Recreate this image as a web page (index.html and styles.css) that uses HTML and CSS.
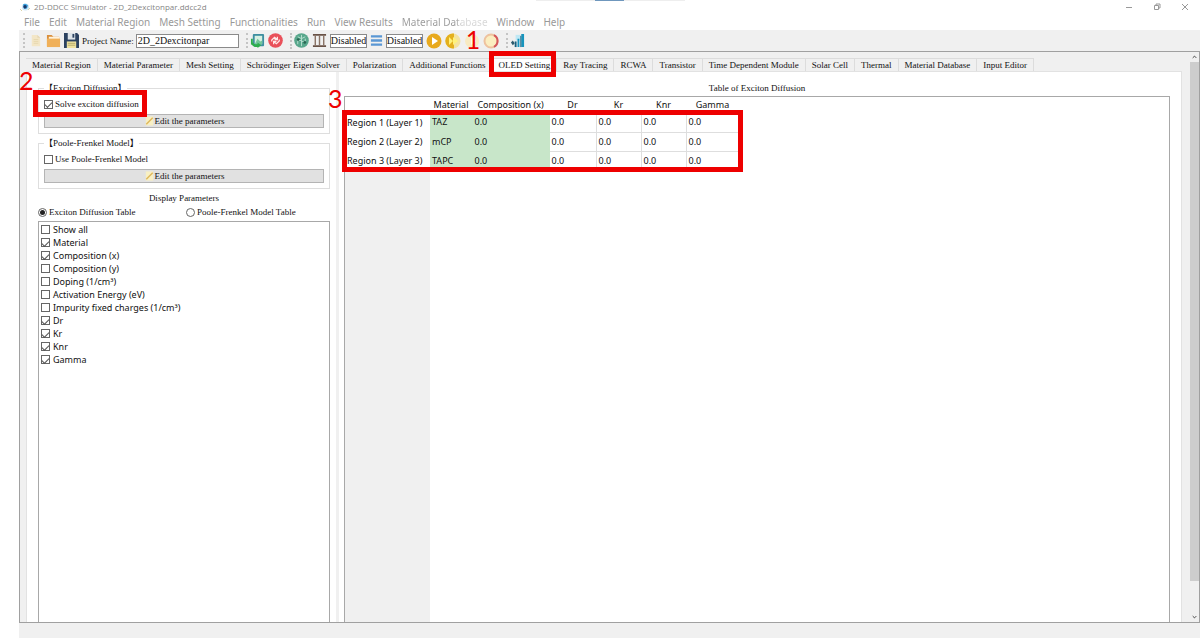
FILE: index.html
```html
<!DOCTYPE html>
<html lang="en">
<head>
<meta charset="utf-8">
<title>2D-DDCC Simulator - 2D_2Dexcitonpar.ddcc2d</title>
<link rel="stylesheet" href="styles.css">
</head>
<body>
<div class="app">
  <header class="titlebar">
    <svg class="app-icon" viewBox="0 0 12 10" aria-hidden="true"><circle cx="6.5" cy="5" r="3.6" fill="#cfe6f5"/><path d="M4 2.5a3.5 3.5 0 0 1 5 1l-1 3-3 .5z" fill="#3aa0dc"/><circle cx="6" cy="4.8" r="1.7" fill="#17386b"/><path d="M1 7l2 2M9 8l2-2" stroke="#d9d3a8"/></svg>
    <span class="title">2D-DDCC Simulator - 2D_2Dexcitonpar.ddcc2d</span>
    <div class="window-buttons">
      <button aria-label="Minimize"><svg viewBox="0 0 8 8"><path d="M1 4.5h6"/></svg></button>
      <button aria-label="Restore"><svg viewBox="0 0 8 8"><path d="M1.5 2.5h4v4h-4zM3 2.5v-1.500h4v4H5.500"/></svg></button>
      <button aria-label="Close"><svg viewBox="0 0 8 8"><path d="M1 1l6 6M7 1L1 7"/></svg></button>
    </div>
    <div class="snap-bar"></div>
  </header>
  <nav class="menubar">
    <a href="#">File</a><a href="#">Edit</a><a href="#">Material Region</a><a href="#">Mesh Setting</a><a href="#">Functionalities</a><a href="#">Run</a><a href="#">View Results</a><a href="#" class="fading">Material Database</a><a href="#">Window</a><a href="#">Help</a>
  </nav>
  <div class="toolbar">
    <div class="tool-group files">
      <button aria-label="New"><svg viewBox="0 0 16 16"><path d="M4 2h6l3 3v9H4z" fill="#f3e6c6"/><path d="M10 2v3h3" fill="#e4d6b4"/><path d="M6 7h5M6 9h5M6 11h5" stroke="#e6d7ae"/></svg></button>
      <button aria-label="Open"><svg viewBox="0 0 16 16"><path d="M1 2h5l2 2h6v10H1z" fill="#d98f3c"/><path d="M3 4h11v5H3z" fill="#fff3dc"/><path d="M1 6h14v9H1z" fill="#f0b059"/></svg></button>
      <button aria-label="Save"><svg viewBox="0 0 16 16"><path d="M0 0h14l2 2v14H0z" fill="#2c4260"/><path d="M4 0h8v7H4z" fill="#dfe5ea"/><path d="M9 1h2v4H9z" fill="#2c4260"/><path d="M3 9h10v7H3z" fill="#efe2a0"/><path d="M4 11h8M4 13h8" stroke="#b8ab6a"/></svg></button>
      <label for="project">Project Name:</label>
      <input id="project" class="project" type="text" value="2D_2Dexcitonpar">
    </div>
    <div class="tool-group">
      <button aria-label="Export picture"><svg viewBox="0 0 16 16"><rect x="3" y="1" width="12" height="13" rx="1" fill="#3e8fa0"/><rect x="5" y="3" width="8" height="9" fill="#d7f0e2"/><path d="M5 12l3-6 3 3 2-1v4z" fill="#75c79a"/><path d="M1 6v6l4 3h4v-3H5L3 10V6z" fill="#2eae4d"/><path d="M8 10l4 3-4 3z" fill="#2eae4d"/></svg></button>
      <button aria-label="Refresh"><svg viewBox="0 0 16 16"><circle cx="8" cy="8" r="7.800" fill="#e9505a"/><path d="M4 9V7.500L7 4.500l3 2.500M10 4v3H7M12 7v1.500L9 11.500 6 9M6 12V9h3" fill="none" stroke="#ffe9e9" stroke-width="1.300"/></svg></button>
    </div>
    <div class="tool-group">
      <button aria-label="Mesh"><svg viewBox="0 0 16 16"><circle cx="8" cy="8" r="7.800" fill="#58a78c"/><path d="M8 2v12M4 4l4 2 4-2M4 12V8h4M8 9h4V6" fill="none" stroke="#b9dfd0"/><circle cx="4.500" cy="7" r="1.500" fill="#286653"/><circle cx="11.500" cy="10" r="1.500" fill="#286653"/></svg></button>
      <button aria-label="Structure"><svg viewBox="0 0 16 16"><path d="M1 2h14M1 14h14" stroke="#695246" stroke-width="2"/><path d="M3.500 3v10M8 3v10M12.500 3v10" stroke="#8b7467" stroke-width="1.500"/></svg></button>
      <input class="state" type="text" value="Disabled" aria-label="Structure state" readonly>
      <button class="layers" aria-label="Layers"><svg viewBox="0 0 14 16"><path d="M1 3.500h12M1 8h12M1 12.500h12" stroke="#5a97d4" stroke-width="2.500"/></svg></button>
      <input class="state" type="text" value="Disabled" aria-label="Layer state" readonly>
      <button class="run" aria-label="Run"><svg viewBox="0 0 16 16"><circle cx="8" cy="8" r="7.500" fill="#e8a91d"/><path d="M6 4l6 4-6 4z" fill="#fff"/></svg></button>
      <button class="run" aria-label="Run all"><svg viewBox="0 0 16 16"><circle cx="8" cy="8" r="7.500" fill="#f4e3a0"/><path d="M9 .6A7.500 7.500 0 1 0 9 15.400z" fill="#e4b01e"/><path d="M4 4l4 4-4 4zM8 4l5 4-5 4z" fill="#fff27a"/></svg></button>
      <button class="run" aria-label="Pause"><svg viewBox="0 0 16 16"><circle cx="8" cy="8" r="7" fill="#f8eac2"/><path d="M7 4l5 4-5 4z" fill="#fffbee"/></svg><span class="mark-number one">1</span></button>
      <button class="run" aria-label="Stop"><svg viewBox="0 0 16 16"><circle cx="8" cy="8" r="6.500" fill="#fbeec0" stroke="#eec29f" stroke-width="2"/><path d="M11 2.200a6.500 6.500 0 0 1 0 11.600" fill="none" stroke="#d4575b" stroke-width="2"/></svg></button>
    </div>
    <div class="tool-group">
      <button aria-label="Chart"><svg viewBox="0 0 16 16"><path d="M6 2h5v6H6z" fill="#bfe8f5"/><path d="M8 6h2v9H8zM12 1h3v14h-3z" fill="#1794bd"/><path d="M5 9h2v6H5z" fill="#15607f"/><path d="M1 10l2-2 2 3-2 2z" fill="#2e5a6c"/><path d="M11.500 3v12" stroke="#16607e"/></svg></button>
    </div>
  </div>

  <main class="workspace">
    <div class="tabs-area">
      <div class="tabs" role="tablist">
        <button role="tab">Material Region</button><button role="tab">Material Parameter</button><button role="tab">Mesh Setting</button><button role="tab">Schrödinger Eigen Solver</button><button role="tab">Polarization</button><button role="tab">Additional Functions</button><button role="tab" class="active" aria-selected="true">OLED Setting<span class="mark-box"></span></button><button role="tab">Ray Tracing</button><button role="tab">RCWA</button><button role="tab">Transistor</button><button role="tab">Time Dependent Module</button><button role="tab">Solar Cell</button><button role="tab">Thermal</button><button role="tab">Material Database</button><button role="tab">Input Editor</button>
      </div>
      <div class="page">
        <section class="side">
          <span class="mark-number two">2</span>
          <fieldset>
            <legend>【Exciton Diffusion】</legend>
            <label class="check marked"><input type="checkbox" checked>Solve exciton diffusion<span class="mark-box"></span></label>
            <button class="edit"><svg viewBox="0 0 12 12" aria-hidden="true"><path d="M2 1h8v10H2z" fill="#f8f0c4"/><path d="M2.500 9.500l7-7" stroke="#dfb95c" stroke-width="1.600"/></svg>Edit the parameters</button>
          </fieldset>
          <fieldset>
            <legend>【Poole-Frenkel Model】</legend>
            <label class="check"><input type="checkbox">Use Poole-Frenkel Model</label>
            <button class="edit"><svg viewBox="0 0 12 12" aria-hidden="true"><path d="M2 1h8v10H2z" fill="#f8f0c4"/><path d="M2.500 9.500l7-7" stroke="#dfb95c" stroke-width="1.600"/></svg>Edit the parameters</button>
          </fieldset>
          <h2>Display Parameters</h2>
          <div class="radios">
            <label class="check"><input type="radio" name="table" checked>Exciton Diffusion Table</label>
            <label class="check"><input type="radio" name="table">Poole-Frenkel Model Table</label>
          </div>
          <div class="list">
            <label class="check"><input type="checkbox">Show all</label>
            <label class="check"><input type="checkbox" checked>Material</label>
            <label class="check"><input type="checkbox" checked>Composition (x)</label>
            <label class="check"><input type="checkbox">Composition (y)</label>
            <label class="check"><input type="checkbox">Doping (1/cm³)</label>
            <label class="check"><input type="checkbox">Activation Energy (eV)</label>
            <label class="check"><input type="checkbox">Impurity fixed charges (1/cm³)</label>
            <label class="check"><input type="checkbox" checked>Dr</label>
            <label class="check"><input type="checkbox" checked>Kr</label>
            <label class="check"><input type="checkbox" checked>Knr</label>
            <label class="check"><input type="checkbox" checked>Gamma</label>
          </div>
        </section>
        <div class="splitter"></div>
        <section class="content">
          <h2>Table of Exciton Diffusion</h2>
          <div class="table-frame">
            <span class="mark-number three">3</span>
            <span class="mark-box"></span>
            <table>
              <colgroup><col class="c-region"><col class="c-material"><col class="c-comp"><col class="c-dr"><col class="c-value"><col class="c-value"><col class="c-gamma"></colgroup>
              <thead><tr><td></td><th>Material</th><th>Composition (x)</th><th>Dr</th><th>Kr</th><th>Knr</th><th>Gamma</th></tr></thead>
              <tbody>
                <tr><th>Region 1 (Layer 1)</th><td class="fixed">TAZ</td><td class="fixed">0.0</td><td>0.0</td><td>0.0</td><td>0.0</td><td>0.0</td></tr>
                <tr><th>Region 2 (Layer 2)</th><td class="fixed">mCP</td><td class="fixed">0.0</td><td>0.0</td><td>0.0</td><td>0.0</td><td>0.0</td></tr>
                <tr><th>Region 3 (Layer 3)</th><td class="fixed">TAPC</td><td class="fixed">0.0</td><td>0.0</td><td>0.0</td><td>0.0</td><td>0.0</td></tr>
              </tbody>
            </table>
          </div>
        </section>
      </div>
    </div>
    <div class="scrollbar" aria-hidden="true">
      <svg viewBox="0 0 10 10"><path d="M3 6l2-2 2 2"/></svg>
      <div class="thumb"></div>
      <svg class="down" viewBox="0 0 10 10"><path d="M3 4l2 2 2-2"/></svg>
    </div>
  </main>
  <footer class="statusbar"></footer>
</div>
</body>
</html>
```

FILE: styles.css
```css
* { box-sizing: border-box; }

body {
  margin: 0;
  background: #fff;
  color: #111;
  font: 9px/12px "Liberation Serif", "Noto Sans CJK TC", serif;
}

button, input { font: inherit; color: inherit; margin: 0; padding: 0; }
button { border: 0; background: none; }
h2 { margin: 0; font: inherit; text-align: center; }

.app {
  display: flex;
  flex-direction: column;
  height: 100vh;
  padding: 0 0 1px 19px;
}

/* Title and menu */
.titlebar {
  position: relative;
  display: flex;
  align-items: center;
  height: 14px;
  font: 8px/14px "Open Sans", sans-serif;
  color: #858585;
}
.app-icon { width: 12px; height: 10px; margin-right: 3px; }
.window-buttons { display: flex; gap: 20px; margin-left: auto; padding-right: 11px; }
.window-buttons button { display: flex; }
.window-buttons svg { width: 8px; height: 8px; fill: none; stroke: #999; }
.snap-bar {
  position: absolute;
  top: 0;
  left: 517px;
  width: 149px;
  height: 1px;
  background: linear-gradient(to right, #eee 59px, #6f97bd 59px 88px, #eee 88px);
}

.menubar {
  display: flex;
  gap: 9px;
  padding: 0 5px;
  height: 16px;
  font: 10px/16px "Noto Sans", sans-serif;
}
.menubar a { color: #999; text-decoration: none; }
.menubar .fading {
  color: transparent;
  background: linear-gradient(to right, #999 62%, #d6d6d6 70%);
  background-clip: text;
}

/* Toolbar */
.toolbar {
  display: flex;
  align-items: center;
  height: 21px;
  background: #f0f0f0;
}
.tool-group {
  display: flex;
  align-items: center;
  gap: 3px;
  margin-left: 4px;
  padding: 0 3px 0 2px;
  border-left: 2px dotted #c4c4c4;
}
.tool-group button { position: relative; display: flex; }
.tool-group svg { width: 15px; height: 15px; }
.tool-group .layers svg { width: 13px; }
.tool-group .run svg { width: 16px; height: 16px; }
.tool-group input {
  height: 14px;
  padding: 0 1px;
  border: 1px solid #8a8a8a;
  background: #fff;
}
.tool-group.files { gap: 2px; padding-left: 3px; }
.files button { margin-right: 1px; }
.files label { font-size: 9px; }
.tool-group .project { width: 103px; font-size: 10px; }
.tool-group .state { width: 37px; padding: 0; font-size: 10px; }

/* Workspace */
.workspace {
  flex: 1;
  min-height: 0;
  display: flex;
  border: 1px solid #a0a0a0;
  background: #f0f0f0;
}
.tabs-area {
  flex: 1;
  min-width: 0;
  display: flex;
  flex-direction: column;
  padding: 6px 8px 0 6px;
}
.tabs { display: flex; }
.tabs button {
  position: relative;
  height: 13px;
  padding: 0 6px;
  border: solid #dcdcdc;
  border-width: 1px 1px 0 0;
  white-space: nowrap;
}
.tabs .active { background: #fff; }

.page {
  flex: 1;
  min-height: 0;
  display: flex;
  background: #fff;
  border: solid #e2e2e2;
  border-width: 1px 1px 0;
}
.side {
  position: relative;
  display: flex;
  flex-direction: column;
  width: 303px;
  padding: 10px 0 0 11px;
}
fieldset {
  display: flex;
  flex-direction: column;
  gap: 4px;
  min-width: 0;
  margin: 0 0 3px;
  padding: 4px 5px 5px;
  border: 1px solid #dedede;
}
legend { padding: 0; }
.check { position: relative; display: flex; align-items: center; gap: 2px; }
.marked { align-self: flex-start; }
.check input {
  appearance: none;
  display: grid;
  place-content: center;
  width: 9px;
  height: 9px;
  border: 1px solid #666;
  background: #fff;
}
.check input[type="checkbox"]:checked::after {
  content: "";
  width: 6px;
  height: 3px;
  border: solid #555;
  border-width: 0 0 1px 1px;
  transform: rotate(-45deg);
}
.check input[type="radio"] { border-radius: 50%; }
.check input[type="radio"]:checked::after {
  content: "";
  width: 5px;
  height: 5px;
  border-radius: 50%;
  background: #222;
}
.edit {
  display: flex;
  align-items: center;
  justify-content: center;
  height: 14px;
  background: #e1e1e1;
  border: 1px solid #b4b4b4;
}
.edit svg { width: 11px; height: 12px; }
.radios { display: grid; grid-template-columns: 148px 1fr; margin: 2px 0 3px; }
.list {
  flex: 1;
  padding: 1px 2px;
  border: 1px solid #a8a8a8;
  border-bottom: 0;
  font: 9px/13px "Noto Sans", sans-serif;
}
.list .check { gap: 3px; }

.splitter { width: 3px; margin: 0 5px 0 6px; background: #f0f0f0; }

.content {
  flex: 1;
  min-width: 0;
  display: flex;
  flex-direction: column;
  padding: 10px 11px 0 0;
}
.table-frame {
  position: relative;
  flex: 1;
  margin-top: 2px;
  border: 1px solid #a8a8a8;
  border-bottom: 0;
  background: linear-gradient(to right, #f0f0f0 85px, #fff 85px);
}
table {
  table-layout: fixed;
  width: 394px;
  border-collapse: collapse;
  font: 9px/12px "Noto Sans", sans-serif;
  background: #fff;
}
.c-region { width: 85px; }
.c-material { width: 42px; }
.c-comp { width: 77px; }
.c-dr { width: 47px; }
.c-value { width: 45px; }
.c-gamma { width: 53px; }
th, td {
  padding: 0 2px;
  font-weight: normal;
  white-space: nowrap;
  text-align: left;
}
thead tr { height: 16px; }
thead th { padding: 0; text-align: center; }
tbody tr { height: 19px; }
tbody td { border: solid #dedede; border-width: 0 1px 1px 0; }
tbody .fixed { background: #c8e6c9; border-color: #c8e6c9; }

.scrollbar { display: flex; flex-direction: column; width: 9px; }
.scrollbar svg { width: 9px; height: 10px; fill: none; stroke: #333; }
.thumb { flex: 1; margin-bottom: 31px; background: #cdcdcd; }

.statusbar { height: 15px; background: #f0f0f0; }

/* Callouts lying over the window */
.mark-box { position: absolute; z-index: 1; border: 5px solid #ee0000; pointer-events: none; }
.tabs .mark-box { inset: -8px 0 -6px -3px; }
.marked .mark-box { inset: -8px -8px -7px -11px; }
.table-frame > .mark-box { top: 13px; left: -3px; width: 401px; height: 62px; }
.mark-number { position: absolute; z-index: 1; font: 25px/20px Lato, sans-serif; color: #ee0000; }
.one { top: -3px; left: 2px; line-height: 18px; }
.two { top: -2px; left: -8px; }
.three { top: -9px; left: -17px; }
```
